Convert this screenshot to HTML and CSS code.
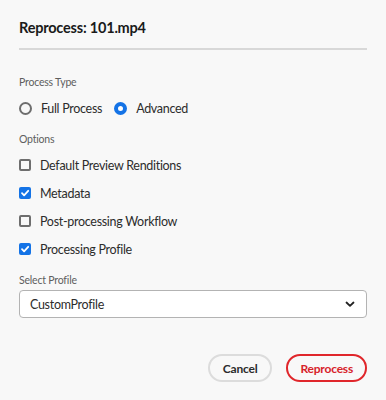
FILE: index.html
```html
<!DOCTYPE html>
<html lang="en">
<head>
    <meta charset="UTF-8">
    <meta name="viewport" content="width=device-width, initial-scale=1.0">
    <title>Reprocess</title>
    <link rel="stylesheet" href="styles.css">
</head>
<body>
    <div class="dialog">
        <h1>Reprocess: 101.mp4</h1>
        <hr class="divider">

        <div class="field">
            <div class="field-label">Process Type</div>
            <div class="radios">
                <label class="radio"><span class="radio-mark"></span>Full Process</label>
                <label class="radio selected"><span class="radio-mark"></span>Advanced</label>
            </div>
        </div>

        <div class="field">
            <div class="field-label">Options</div>
            <div class="checks">
                <label class="check"><span class="box"></span>Default Preview Renditions</label>
                <label class="check checked"><span class="box"><svg viewBox="0 0 12 12" width="12" height="12"><path d="M3 6.2 L5.1 8.3 L9.2 3.8" fill="none" stroke="#fff" stroke-width="1.8" stroke-linecap="round" stroke-linejoin="round"/></svg></span>Metadata</label>
                <label class="check"><span class="box"></span>Post-processing Workflow</label>
                <label class="check checked"><span class="box"><svg viewBox="0 0 12 12" width="12" height="12"><path d="M3 6.2 L5.1 8.3 L9.2 3.8" fill="none" stroke="#fff" stroke-width="1.8" stroke-linecap="round" stroke-linejoin="round"/></svg></span>Processing Profile</label>
            </div>
        </div>

        <div class="field">
            <div class="field-label">Select Profile</div>
            <div class="select">
                <span>CustomProfile</span>
                <svg viewBox="0 0 10 10" width="10" height="10"><path d="M1.5 3.5 L5 6.8 L8.5 3.5" fill="none" stroke="#222" stroke-width="1.8" stroke-linecap="round" stroke-linejoin="round"/></svg>
            </div>
        </div>

        <div class="actions">
            <button class="btn cancel">Cancel</button>
            <button class="btn primary">Reprocess</button>
        </div>
    </div>
</body>
</html>
```

FILE: styles.css
```css
body {
    margin: 0;
    background-color: #f8f8f8;
    font-family: Lato, 'Noto Sans', sans-serif;
    color: #2c2c2c;
}
.dialog {
    padding: 17px 19px 18px 19px;
}
.dialog h1 {
    margin: 0;
    font-size: 14.5px;
    font-weight: 700;
    line-height: 22px;
    letter-spacing: -0.2px;
    color: #1a1a1a;
}
.divider {
    margin: 9px 0 0;
    border: none;
    height: 2px;
    background-color: #d8d8d8;
}
.field {
    margin-top: 24px;
}
.field + .field {
    margin-top: 9px;
}
.field-label {
    font-size: 10.5px;
    line-height: 16px;
    letter-spacing: -0.2px;
    color: #5e5e5e;
}
.radios {
    display: flex;
    gap: 12px;
    margin-top: 4px;
}
.radio, .check {
    display: flex;
    align-items: center;
    font-size: 12.5px;
    letter-spacing: -0.3px;
    height: 28px;
    color: #2c2c2c;
}
.radio-mark {
    box-sizing: border-box;
    width: 13px;
    height: 13px;
    border: 2px solid #6e6e6e;
    border-radius: 50%;
    margin-right: 9px;
}
.radio.selected .radio-mark {
    border: 4px solid #1473e6;
    background-color: #fff;
}
.checks {
    display: flex;
    flex-direction: column;
    margin-top: 4px;
}
.box {
    box-sizing: border-box;
    width: 12px;
    height: 12px;
    border: 2px solid #6e6e6e;
    border-radius: 2px;
    margin-right: 9px;
    display: flex;
    align-items: center;
    justify-content: center;
}
.check.checked .box {
    border: none;
    background-color: #1473e6;
}
.select {
    box-sizing: border-box;
    display: flex;
    justify-content: space-between;
    align-items: center;
    height: 28px;
    margin-top: 2px;
    padding: 0 11px 0 10px;
    background-color: #fff;
    border: 1px solid #b3b3b3;
    border-radius: 4px;
    font-size: 12.5px;
    letter-spacing: -0.3px;
    color: #2c2c2c;
}
.actions {
    display: flex;
    justify-content: flex-end;
    gap: 14px;
    margin-top: 36px;
}
.btn {
    box-sizing: border-box;
    height: 28px;
    padding: 0 13px;
    border-radius: 14px;
    font-family: inherit;
    font-size: 12px;
    font-weight: 700;
    letter-spacing: -0.2px;
    background-color: transparent;
    cursor: pointer;
}
.btn.cancel {
    border: 2px solid #dcdcdc;
    color: #2c2c2c;
}
.btn.primary {
    padding: 0 12px;
    border: 2px solid #e0262b;
    color: #d7232a;
}
```
